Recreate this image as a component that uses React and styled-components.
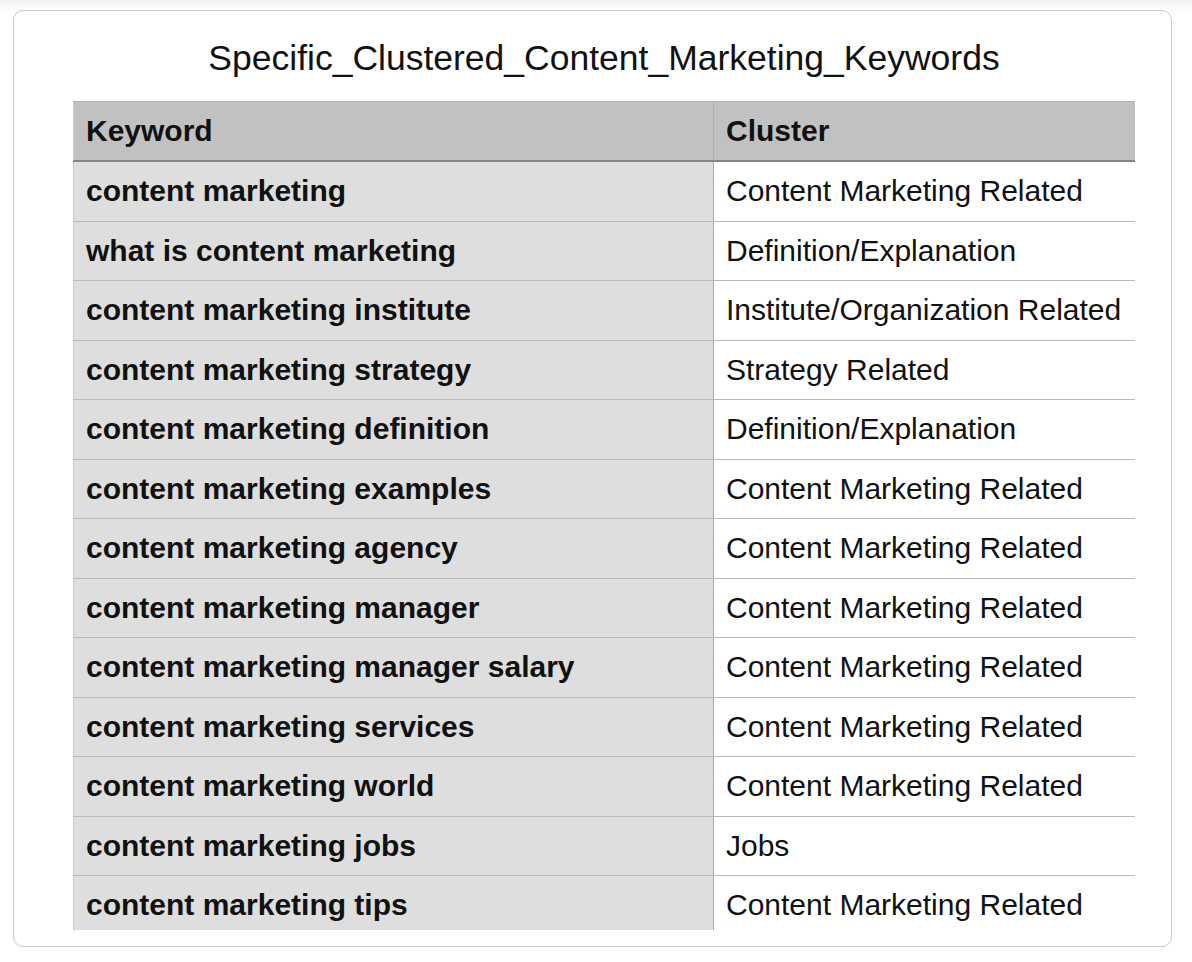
import React from "react";
import styled, { createGlobalStyle } from "styled-components";

const rows = [
  ["content marketing", "Content Marketing Related"],
  ["what is content marketing", "Definition/Explanation"],
  ["content marketing institute", "Institute/Organization Related"],
  ["content marketing strategy", "Strategy Related"],
  ["content marketing definition", "Definition/Explanation"],
  ["content marketing examples", "Content Marketing Related"],
  ["content marketing agency", "Content Marketing Related"],
  ["content marketing manager", "Content Marketing Related"],
  ["content marketing manager salary", "Content Marketing Related"],
  ["content marketing services", "Content Marketing Related"],
  ["content marketing world", "Content Marketing Related"],
  ["content marketing jobs", "Jobs"],
  ["content marketing tips", "Content Marketing Related"],
];

const GlobalStyle = createGlobalStyle`
  html, body {
    margin: 0;
    padding: 0;
    background: linear-gradient(#f1f1f1 0, #fafafa 8px, #ffffff 14px);
    font-family: "Liberation Sans", Arial, Helvetica, sans-serif;
    color: #111;
  }
`;

const Page = styled.div`
  width: 1192px;
  height: 962px;
  padding: 10px 20px 0 13px;
  box-sizing: border-box;
`;

const Card = styled.div`
  width: 1159px;
  height: 937px;
  box-sizing: border-box;
  background: #fff;
  border: 1px solid #cbc7cf;
  border-radius: 10px;
  display: flex;
  flex-direction: column;
`;

const Title = styled.h1`
  margin: 0;
  height: 90px;
  display: flex;
  align-items: center;
  justify-content: center;
  padding: 4px 0 0 23px;
  box-sizing: border-box;
  font-size: 35.5px;
  font-weight: 400;
  color: #111;
`;

const Scroll = styled.div`
  margin: 0 36px 0 59px;
  height: 829px;
  overflow: hidden;
`;

const Table = styled.table`
  width: 1062px;
  border-collapse: collapse;
  table-layout: fixed;
  font-size: 30px;
`;

const Th = styled.th`
  height: 58px;
  background: #c1c1c1;
  text-align: left;
  font-weight: 700;
  padding: 0 12px;
  border-top: 1px solid #b0b0b0;
  border-bottom: 2px solid #848484;
  border-left: 1px solid ${(p) => (p.$first ? "#c8c8c8" : "#b3b3b3")};
  border-right: 1px solid #b0b0b0;
`;

const Td = styled.td`
  height: 58.5px;
  padding: 0 12px;
  white-space: nowrap;
  background: ${(p) => (p.$key ? "#dedede" : "#ffffff")};
  font-weight: ${(p) => (p.$key ? 700 : 400)};
  border-bottom: 1px solid #b9b9b9;
  border-left: 1px solid ${(p) => (p.$key ? "#c8c8c8" : "#4a4a4a")};
  border-right: 1px solid #a8a8a8;
`;

export default function App() {
  return (
    <Page>
      <GlobalStyle />
      <Card>
        <Title>Specific_Clustered_Content_Marketing_Keywords</Title>
        <Scroll>
          <Table>
            <colgroup>
              <col style={{ width: "640px" }} />
              <col style={{ width: "422px" }} />
            </colgroup>
            <thead>
              <tr>
                <Th $first>Keyword</Th>
                <Th>Cluster</Th>
              </tr>
            </thead>
            <tbody>
              {rows.map(([k, c]) => (
                <tr key={k}>
                  <Td $key>{k}</Td>
                  <Td>{c}</Td>
                </tr>
              ))}
            </tbody>
          </Table>
        </Scroll>
      </Card>
    </Page>
  );
}
